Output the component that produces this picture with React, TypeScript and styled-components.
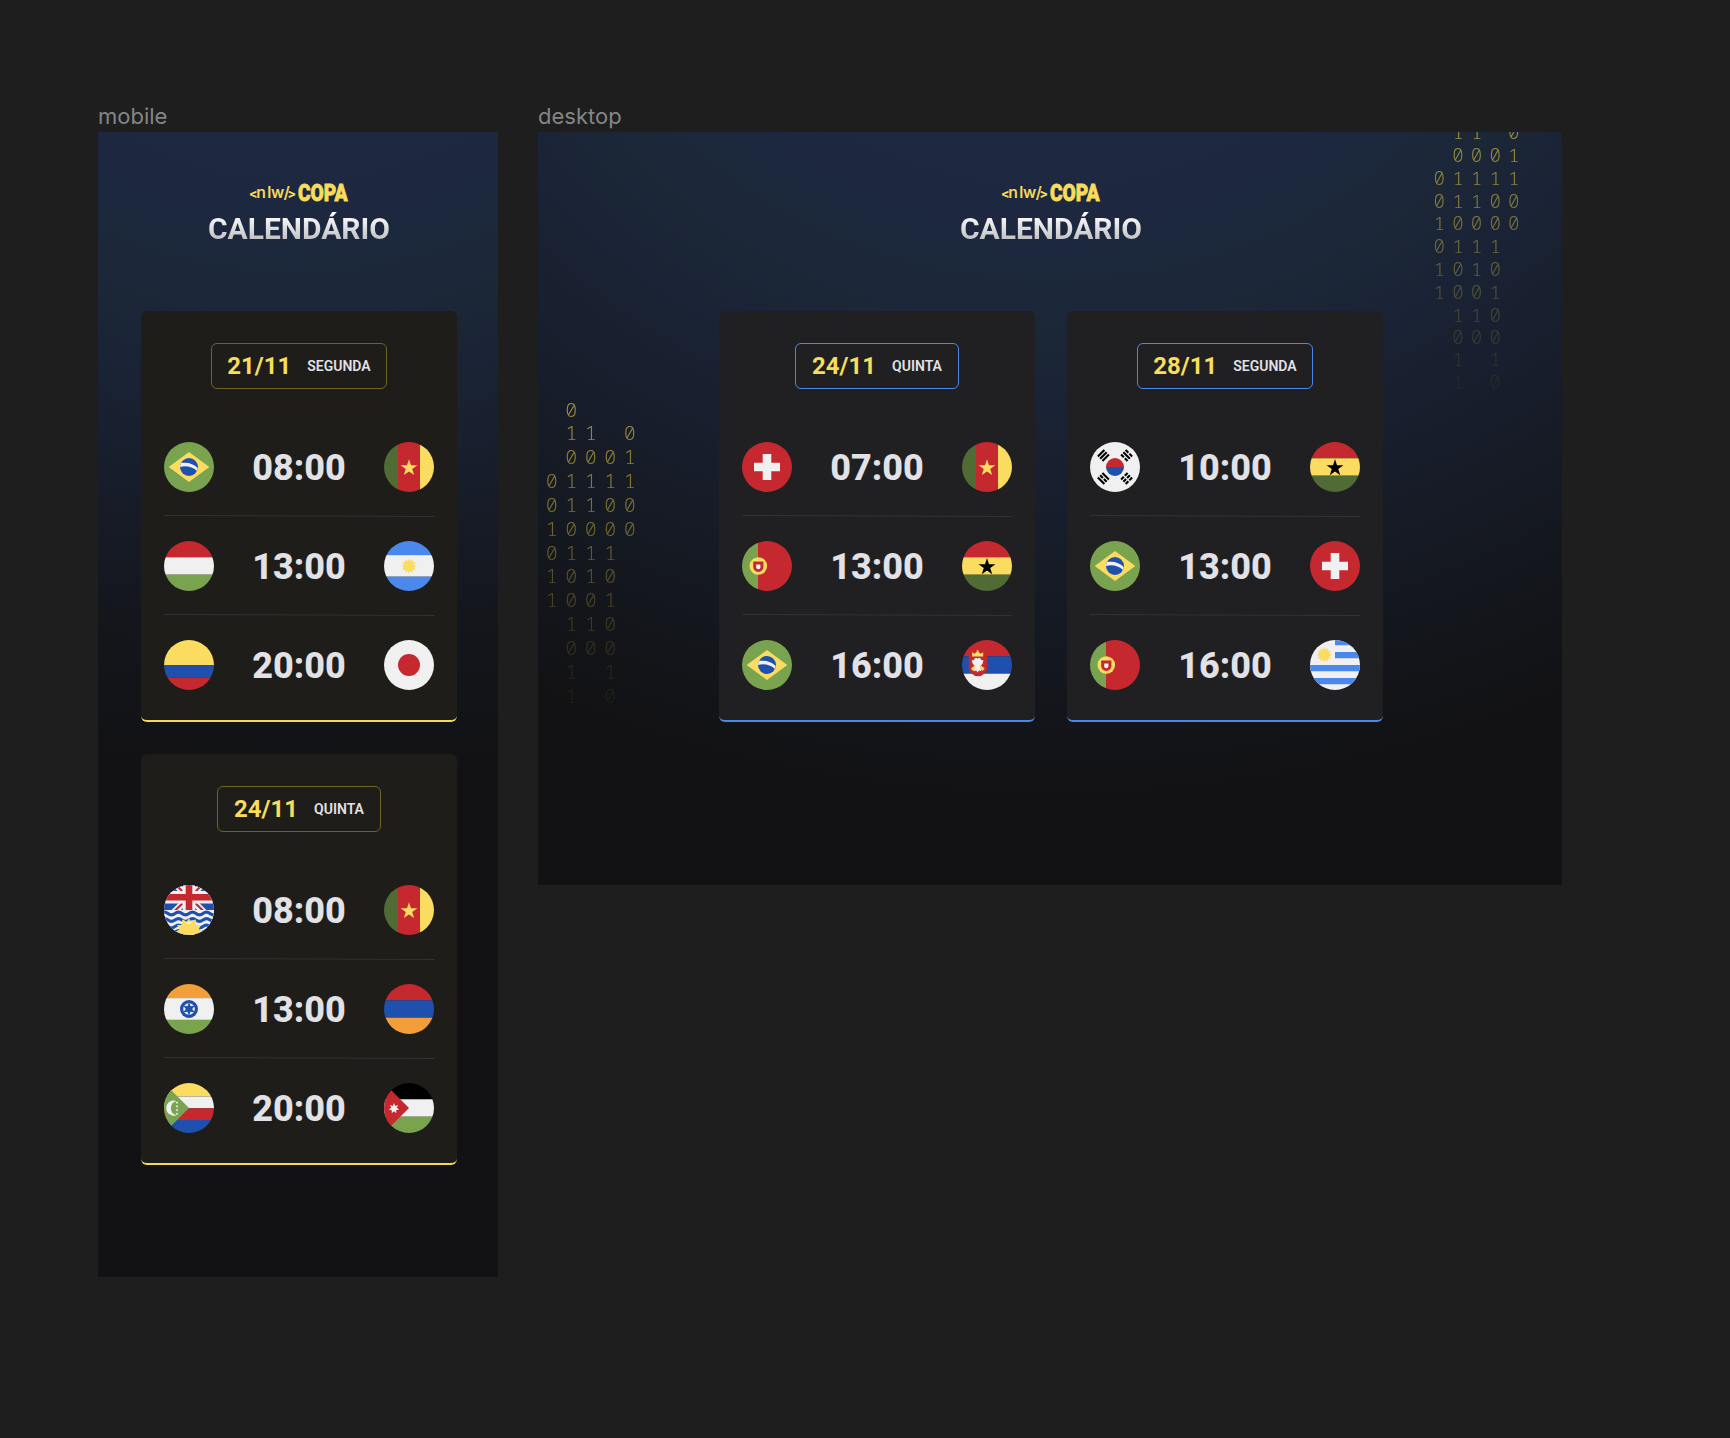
import React from 'react';
import styled, { createGlobalStyle, css } from 'styled-components';

const GlobalStyle = createGlobalStyle`
  * { box-sizing: border-box; margin: 0; padding: 0; }
  body { background: #1e1e1e; font-family: Roboto, "Liberation Sans", sans-serif; }
`;

const c = {
  green: '#7aa350',
  moss: '#506c34',
  red: '#c62830',
  yellow: '#fadc60',
  blue: '#1f50ae',
  sky: '#4b88ec',
  white: '#f0f0f0',
  orange: '#f29e3b',
};

/* ---------- layout ---------- */

const Canvas = styled.main`
  display: flex;
  align-items: flex-start;
  gap: 40px;
  min-height: 1438px;
  padding: 103px 98px 0;
`;

const Artboard = styled.section`
  display: flex;
  flex-direction: column;
`;

const ArtboardName = styled.h2`
  height: 29px;
  font: 400 22px/27px Inter, sans-serif;
  color: #858585;
`;

const Frame = styled.div<{ $desktop?: boolean }>`
  position: relative;
  overflow: hidden;
  display: flex;
  flex-direction: column;
  align-items: center;
  padding: 51px 0 0 2px;
  background-color: #121214;
  ${({ $desktop }) =>
    $desktop
      ? css`
          width: 1024px;
          height: 753px;
          background-image: radial-gradient(
            ellipse 1100px 900px at 50% -232px,
            #1e2840 0%, #1e2840 30%, #1d2840 36%, #1c2839 44%, #1a2335 56%,
            #171d2a 70%, #14171e 85%, #121214 100%
          );
        `
      : css`
          width: 400px;
          height: 1145px;
          background-image: radial-gradient(
            ellipse 1000px 880px at 50% -232px,
            #1e2840 0%, #1e2840 30%, #1d2840 36%, #1c2839 44%, #1a2335 56%,
            #171d2a 68%, #14161c 84%, #121214 100%
          );
        `}
`;

const LogoMark = styled.svg`
  display: block;
  width: 100px;
  height: 20px;
  overflow: visible;
  fill: #f7dd5c;
`;

const Title = styled.h1`
  margin-top: 8px;
  height: 36px;
  font-size: 30px;
  line-height: 36px;
  font-weight: 700;
  background: linear-gradient(180deg, #ffffff 10%, #e8e8ea 35%, #bdbdc2 85%);
  -webkit-background-clip: text;
  background-clip: text;
  color: transparent;
`;

const Cards = styled.div<{ $row?: boolean }>`
  display: flex;
  flex-direction: ${({ $row }) => ($row ? 'row' : 'column')};
  gap: 32px;
  margin-top: 64px;
`;

const Card = styled.article<{ $desktop?: boolean }>`
  display: flex;
  flex-direction: column;
  align-items: center;
  width: 316px;
  height: 411px;
  padding: 32px 23px 0;
  border-radius: 6px;
  background: ${({ $desktop }) => ($desktop ? '#202022' : '#1e1d19')};
  border-bottom: 2px solid ${({ $desktop }) => ($desktop ? '#4b88ec' : '#f3d957')};
`;

const Badge = styled.header<{ $desktop?: boolean }>`
  display: flex;
  align-items: center;
  gap: 16px;
  height: 46px;
  padding: 0 15.8px;
  border-radius: 6px;
  border: 1px solid ${({ $desktop }) => ($desktop ? '#4b88ec' : '#6f6328')};
`;

const DateText = styled.span`
  font-size: 24px;
  font-weight: 700;
  color: #f7dd5c;
`;

const Weekday = styled.span`
  font-size: 14px;
  font-weight: 600;
  color: #e1e1e6;
`;

const Games = styled.ul`
  list-style: none;
  width: 100%;
  margin-top: 53px;
`;

const Game = styled.li`
  display: flex;
  align-items: center;
  justify-content: space-between;
  height: 50px;
`;

const Divider = styled.li`
  height: 1px;
  margin: 24px 0;
  background: #323236;
  transform: translateY(-0.5px) rotate(0.21deg);
`;

const Time = styled.strong`
  padding-top: 1px;
  font-size: 36px;
  line-height: 42px;
  font-weight: 800;
  color: #e1e1e6;
`;

const FlagSvg = styled.svg`
  display: block;
  width: 50px;
  height: 50px;
  border-radius: 50%;
`;

/* ---------- binary rain ---------- */

const Rain = styled.div<{ $side: 'left' | 'right' }>`
  position: absolute;
  display: grid;
  grid-template-columns: repeat(5, 19.5px);
  grid-auto-rows: 23.85px;
  transform-origin: 0 0;
  color: #f7dd43;
  mask-image: linear-gradient(180deg, rgba(0, 0, 0, 0.6), rgba(0, 0, 0, 0.43) 38%, rgba(0, 0, 0, 0.18) 72%, rgba(0, 0, 0, 0.04));
  ${({ $side }) =>
    $side === 'left'
      ? css`
          top: 265.5px;
          left: 4px;
        `
      : css`
          top: -11.5px;
          left: 892px;
          transform: scale(0.955);
        `}
`;

const Bit = styled.span`
  text-align: center;
  font: 350 20px/24px 'Noto Sans Mono', 'Liberation Mono', monospace;
  font-feature-settings: 'zero' 1;
`;

const bits = [
  ' 0   ', ' 11 0', ' 0001', '01111', '01100', '10000', '0111 ',
  '1010 ', '1001 ', ' 110 ', ' 000 ', ' 1 1 ', ' 1 0 ',
];

const BinaryRain = ({ side }: { side: 'left' | 'right' }) => (
  <Rain $side={side} aria-hidden>
    {(side === 'left' ? bits : bits.slice(1)).join('').split('').map((b, i) => (
      <Bit key={i}>{b.trim()}</Bit>
    ))}
  </Rain>
);

/* ---------- flags ---------- */

const spikes = (cx: number, cy: number, R: number, r: number, n: number, turn = -90) =>
  Array.from({ length: n * 2 }, (_, i) => {
    const a = ((turn + (i * 180) / n) * Math.PI) / 180;
    const d = i % 2 ? r : R;
    return `${(cx + d * Math.cos(a)).toFixed(2)},${(cy + d * Math.sin(a)).toFixed(2)}`;
  }).join(' ');

const Rows = ({ of }: { of: [string, number][] }) => {
  let y = 0;
  return (
    <>
      {of.map(([fill, h], i) => {
        const top = y;
        y += h;
        return <rect key={i} y={top} width="50" height={h} fill={fill} />;
      })}
    </>
  );
};

const trigram = (x: number, y: number, turn: number, broken: boolean[]) => (
  <g transform={`translate(${x} ${y}) rotate(${turn})`} stroke="#000" strokeWidth="2.1">
    {broken.map((b, i) => (
      <path key={i} d={b ? `M-4.6 ${(i - 1) * 3.2}h3.9M.7 ${(i - 1) * 3.2}h3.9` : `M-4.6 ${(i - 1) * 3.2}h9.2`} />
    ))}
  </g>
);

const flags: Record<string, React.ReactNode> = {
  brazil: (
    <>
      <rect width="50" height="50" fill={c.green} />
      <path d="M4.7 25 25 10l20.3 15L25 40z" fill={c.yellow} />
      <circle cx="25" cy="25" r="9" fill={c.blue} />
      <path d="M17 21.1C23.5 19.8 29.8 21.8 33.7 26L33 29C28.5 24.8 22.5 23.5 16 24.9Q16.2 22.8 17 21.1z" fill={c.white} />
    </>
  ),
  cameroon: (
    <>
      <rect width="14" height="50" fill={c.moss} />
      <rect x="14" width="22" height="50" fill={c.red} />
      <rect x="36" width="14" height="50" fill={c.yellow} />
      <polygon points={spikes(25, 26, 8.8, 3.4, 5)} fill={c.yellow} />
    </>
  ),
  hungary: <Rows of={[[c.red, 16.3], [c.white, 17.4], [c.green, 16.3]]} />,
  argentina: (
    <>
      <Rows of={[[c.sky, 14.1], [c.white, 21.6], [c.sky, 14.3]]} />
      <polygon points={spikes(25, 25, 7.8, 5.2, 12)} fill={c.yellow} />
    </>
  ),
  colombia: <Rows of={[[c.yellow, 25], [c.blue, 12.5], [c.red, 12.5]]} />,
  japan: (
    <>
      <rect width="50" height="50" fill={c.white} />
      <circle cx="25" cy="25" r="11" fill={c.red} />
    </>
  ),
  indianOcean: (
    <>
      <rect width="50" height="50" fill={c.white} />
      <path d="M0 0h50v25H0z" fill={c.blue} />
      <path d="M5-7 45 32M45-7 5 32" stroke={c.white} strokeWidth="6.5" />
      <path d="M9-3 24 12M41-3 26 12M27 14 41 27.5M23 14 9 27.5" stroke={c.red} strokeWidth="2.2" />
      <path d="M25 0v25M0 12.3h50" stroke={c.white} strokeWidth="12.6" />
      <path d="M25 0v25M0 12.3h50" stroke={c.red} strokeWidth="6.6" />
      <path d="M0 25h50v25H0z" fill={c.white} />
      <g fill="none" stroke={c.blue} strokeWidth="3">
        <path d="M-3 28.5q3.5-2.8 7 0t7 0 7 0 7 0 7 0 7 0 7 0 7 0" />
        <path d="M-3 35q3.5-2.8 7 0t7 0 7 0 7 0 7 0 7 0 7 0 7 0" />
        <path d="M-3 41.5q3.5-2.8 7 0t7 0 7 0 7 0 7 0 7 0 7 0 7 0M-3 47q3.5-2.8 7 0t7 0 7 0 7 0 7 0 7 0 7 0 7 0" />
      </g>
      <polygon points={spikes(25, 47, 13.8, 10, 12)} fill={c.yellow} />
      <path d="M18.5 34.3l2.5 1.5 4 2 4-2 2.5-1.5v7h-13z" fill={c.yellow} />
      <path d="M22.8 36.8l1.2.7 1-1.2 1 1.2 1.2-.7v2h-4.4z" fill={c.white} />
    </>
  ),
  india: (
    <>
      <Rows of={[[c.orange, 14.1], [c.white, 21.8], [c.green, 14.1]]} />
      <circle cx="25" cy="25" r="9" fill={c.blue} />
      <circle cx="25" cy="25" r="5.8" fill={c.white} />
      <polygon points={spikes(25, 25, 6.5, 3.2, 6)} fill={c.blue} />
    </>
  ),
  armenia: <Rows of={[[c.red, 16.3], [c.blue, 17.4], [c.orange, 16.3]]} />,
  comoros: (
    <>
      <Rows of={[[c.yellow, 13.5], [c.white, 11.8], [c.red, 11.7], [c.blue, 13]]} />
      <path d="M0 0 25 25 0 50z" fill={c.green} />
      <path d="M12.5 18A7.6 7.6 0 1 0 12.5 32.2A7.3 7.3 0 0 1 12.5 18z" fill={c.white} />
      {[19.5, 23.3, 27.1, 30.9].map((y) => (
        <polygon key={y} points={spikes(13, y, 1.5, 0.7, 5)} fill={c.white} />
      ))}
    </>
  ),
  jordan: (
    <>
      <Rows of={[['#000', 16.3], [c.white, 17.4], [c.green, 16.3]]} />
      <path d="M0 0 25 25 0 50z" fill={c.red} />
      <polygon points={spikes(10, 25.4, 5.3, 2.8, 7)} fill={c.white} />
    </>
  ),
  switzerland: (
    <>
      <rect width="50" height="50" fill={c.red} />
      <path d="M20.7 12h8.6v8.7H38v8.6h-8.7V38h-8.6v-8.7H12v-8.6h8.7z" fill={c.white} />
    </>
  ),
  portugal: (
    <>
      <rect width="16" height="50" fill={c.green} />
      <rect x="16" width="34" height="50" fill={c.red} />
      <circle cx="16.3" cy="25" r="8.8" fill={c.yellow} />
      <path d="M11.2 20.6h10.2v5.2a5.1 5.1 0 0 1-10.2 0z" fill={c.red} />
      <path d="M14.2 23.6h4.2v2.6a2.1 2.1 0 0 1-4.2 0z" fill={c.white} />
    </>
  ),
  ghana: (
    <>
      <Rows of={[[c.red, 16.3], [c.yellow, 17.4], [c.moss, 16.3]]} />
      <polygon points={spikes(25, 26, 8.9, 3.4, 5)} fill="#000" />
    </>
  ),
  serbia: (
    <>
      <Rows of={[[c.red, 16.3], [c.blue, 17.4], [c.white, 16.3]]} />
      <path d="M6.8 15.5h18.4v11.5a9.2 9.2 0 0 1-18.4 0z" fill={c.red} />
      <path d="M9 28.5l3.5-3 2 2-3.5 3.5zM22.600 28.500l-3.500-3-2 2 3.500 3.500z" fill={c.yellow} />
      <path d="M10 12.2l2.8 1.6 1.3-1.6.7-.2v-1.800h1.600v1.800l.7.2 1.300 1.600 2.800-1.600v4.300H10z" fill={c.yellow} />
      <path d="M12.5 18.500l2.200-.8.900 1.400.9-1.400 2.200.8.3 1.500 2.500.3-1 3.400-2.600 2.700.3 1.500 1.200 3.300-2.500-.6-1.300 1.800-1.300-1.800-2.500.6 1.200-3.300.3-1.500-2.600-2.700-1-3.400 2.500-.3z" fill={c.white} />
    </>
  ),
  korea: (
    <>
      <rect width="50" height="50" fill={c.white} />
      <path d="M16 25a9 9 0 0 1 18 0z" fill={c.red} />
      <path d="M16 25a9 9 0 0 0 18 0z" fill={c.blue} />
      {trigram(13.4, 13.4, -45, [false, false, false])}
      {trigram(36.6, 13.4, 45, [true, false, true])}
      {trigram(13.4, 36.6, 45, [false, true, false])}
      {trigram(36.6, 36.6, -45, [true, true, true])}
    </>
  ),
  uruguay: (
    <>
      <rect width="50" height="50" fill={c.white} />
      <path d="M25 0h25v5.3H25zM25 12h25v6.2H25zM0 25h50v6.2H0zM0 38h50v6.3H0z" fill={c.sky} />
      <polygon points={spikes(14.3, 14.7, 7.8, 5.2, 12)} fill={c.yellow} />
    </>
  ),
};

const Flag = ({ name }: { name: string }) => (
  <FlagSvg viewBox="0 0 50 50" role="img" aria-label={name}>{flags[name]}</FlagSvg>
);

/* ---------- content ---------- */

const Logo = () => (
  <LogoMark viewBox="0 0 100 20">
    <g fontFamily="Inter, sans-serif" fontWeight="500">
      <text x="0" y="15" fontSize="12.5" fontWeight="800">{'<'}</text>
      <text x="7.2 18.2 22 34.7" y="15" fontSize="16" stroke="#f7dd5c" strokeWidth="0.2">nlw/</text>
      <text x="38.4" y="15" fontSize="12.5" fontWeight="800">{'>'}</text>
    </g>
    <text
      x="48.9" y="18.4" fontFamily="Roboto, sans-serif" fontWeight="900" fontSize="24.3"
      textLength="49.8" lengthAdjust="spacingAndGlyphs" stroke="#f7dd5c" strokeWidth="0.8"
    >
      COPA
    </text>
  </LogoMark>
);

type Day = { date: string; weekday: string; games: [string, string, string][] };

const mobileDays: Day[] = [
  {
    date: '21/11', weekday: 'SEGUNDA',
    games: [['brazil', '08:00', 'cameroon'], ['hungary', '13:00', 'argentina'], ['colombia', '20:00', 'japan']],
  },
  {
    date: '24/11', weekday: 'QUINTA',
    games: [['indianOcean', '08:00', 'cameroon'], ['india', '13:00', 'armenia'], ['comoros', '20:00', 'jordan']],
  },
];

const desktopDays: Day[] = [
  {
    date: '24/11', weekday: 'QUINTA',
    games: [['switzerland', '07:00', 'cameroon'], ['portugal', '13:00', 'ghana'], ['brazil', '16:00', 'serbia']],
  },
  {
    date: '28/11', weekday: 'SEGUNDA',
    games: [['korea', '10:00', 'ghana'], ['brazil', '13:00', 'switzerland'], ['portugal', '16:00', 'uruguay']],
  },
];

const DayCard = ({ day, desktop }: { day: Day; desktop?: boolean }) => (
  <Card $desktop={desktop}>
    <Badge $desktop={desktop}>
      <DateText>{day.date}</DateText>
      <Weekday>{day.weekday}</Weekday>
    </Badge>
    <Games>
      {day.games.map(([home, time, away], i) => (
        <React.Fragment key={time}>
          {i > 0 && <Divider role="separator" />}
          <Game>
            <Flag name={home} />
            <Time>{time}</Time>
            <Flag name={away} />
          </Game>
        </React.Fragment>
      ))}
    </Games>
  </Card>
);

const Board = ({ name, days, desktop }: { name: string; days: Day[]; desktop?: boolean }) => (
  <Artboard>
    <ArtboardName>{name}</ArtboardName>
    <Frame $desktop={desktop}>
      {desktop && <BinaryRain side="left" />}
      {desktop && <BinaryRain side="right" />}
      <Logo />
      <Title>CALENDÁRIO</Title>
      <Cards $row={desktop}>
        {days.map((day) => <DayCard key={day.date} day={day} desktop={desktop} />)}
      </Cards>
    </Frame>
  </Artboard>
);

export default function App() {
  return (
    <>
      <GlobalStyle />
      <Canvas>
        <Board name="mobile" days={mobileDays} />
        <Board name="desktop" days={desktopDays} desktop />
      </Canvas>
    </>
  );
}
